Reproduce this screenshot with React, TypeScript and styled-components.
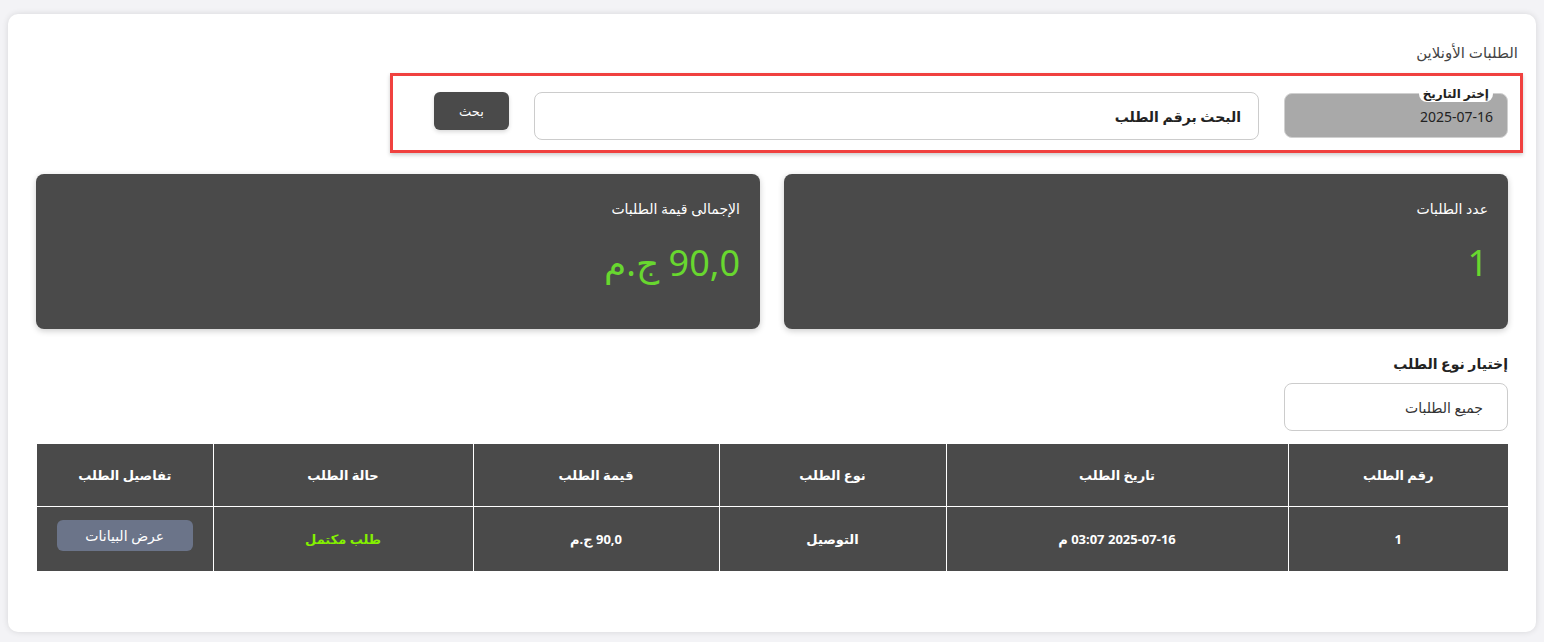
import React from "react";
import styled, { createGlobalStyle } from "styled-components";

const Global = createGlobalStyle`
  html, body { margin: 0; padding: 0; background: #f3f3f6; }
  body { font-family: "Noto Sans", "DejaVu Sans", sans-serif; }
  * { box-sizing: border-box; }
`;

const Page = styled.div`
  padding: 14px 8px 10px 8px;
`;

const Card = styled.div`
  direction: rtl;
  background: #fff;
  border-radius: 10px;
  box-shadow: 0 0 6px rgba(0, 0, 0, 0.12);
  height: 618px;
  padding: 26px 28px 0 28px;
  display: flex;
  flex-direction: column;
`;

const Title = styled.div`
  margin-right: -10px;
  font-size: 15px;
  color: #444;
  line-height: 24px;
  height: 24px;
`;

const FilterBox = styled.div`
  margin-top: 9px;
  margin-right: -15px;
  width: 1133px;
  height: 80px;
  border: 3px solid #f0413f;
  box-shadow: 0 2px 4px rgba(0, 0, 0, 0.2);
  display: flex;
  align-items: flex-start;
  padding: 16px 12px 0 0;
  gap: 25px;
`;

const DateField = styled.div`
  position: relative;
  width: 224px;
  height: 45px;
  background: #a9a9a9;
  border: 1px solid #d0d0d0;
  border-radius: 8px;
  margin-top: 1px;
  display: flex;
  align-items: center;
  padding: 2px 14px 0 14px;
  font-size: 14px;
  color: #222;
`;

const FloatLabel = styled.span`
  position: absolute;
  top: -8px;
  right: 14px;
  background: #fff;
  border-radius: 8px;
  padding: 0 4px;
  font-size: 12px;
  line-height: 16px;
  color: #222;
  font-weight: 600;
`;

const SearchInput = styled.div`
  width: 725px;
  height: 48px;
  border: 1px solid #ccc;
  border-radius: 8px;
  display: flex;
  align-items: center;
  padding: 0 17px;
  font-size: 14px;
  font-weight: 600;
  color: #222;
`;

const SearchButton = styled.button`
  width: 75px;
  height: 38px;
  border: none;
  border-radius: 6px;
  background: #4a4a4a;
  color: #fff;
  font-family: inherit;
  font-size: 13px;
  box-shadow: 0 2px 4px rgba(0, 0, 0, 0.15);
`;

const Stats = styled.div`
  margin-top: 21px;
  display: flex;
  gap: 24px;
`;

const StatCard = styled.div`
  flex: 1;
  height: 155px;
  background: #4a4a4a;
  border-radius: 8px;
  box-shadow: 0 2px 6px rgba(0, 0, 0, 0.2);
  padding: 24px 20px 0 20px;
  color: #fff;
`;

const StatLabel = styled.div`
  font-size: 14px;
  line-height: 22px;
`;

const StatValue = styled.div`
  margin-top: 18px;
  font-size: 36px;
  line-height: 50px;
  color: #68d72f;
`;

const TypeLabel = styled.div`
  margin-top: 24px;
  font-size: 14px;
  font-weight: 700;
  color: #222;
  line-height: 22px;
`;

const Select = styled.div`
  margin-top: 8px;
  width: 224px;
  height: 48px;
  border: 1px solid #ccc;
  border-radius: 8px;
  display: flex;
  align-items: center;
  padding: 0 24px;
  font-size: 14px;
  color: #333;
`;

const Table = styled.table`
  margin-top: 13px;
  margin-left: 1px;
  width: 1471px;
  border-collapse: collapse;
  background: #4a4a4a;
  color: #fff;
  font-size: 13px;
  font-weight: 700;
  text-align: center;
`;

const Th = styled.th<{ $w: number }>`
  width: ${(p) => p.$w}px;
  height: 62px;
  border: 1px solid #fff;
  border-top: none;
  font-weight: 700;
  &:first-child { border-right: none; }
  &:last-child { border-left: none; }
`;

const Td = styled.td<{ $green?: boolean }>`
  height: 65px;
  border: 1px solid #fff;
  border-bottom: none;
  color: ${(p) => (p.$green ? "#84f000" : "#fff")};
  &:first-child { border-right: none; }
  &:last-child { border-left: none; }
`;

const DetailsButton = styled.button`
  width: 136px;
  height: 31px;
  margin-bottom: 6px;
  border: none;
  border-radius: 6px;
  background: #6b7489;
  color: #fff;
  font-family: inherit;
  font-size: 14px;
`;

const columns = [
  { label: "رقم الطلب", w: 220 },
  { label: "تاريخ الطلب", w: 342 },
  { label: "نوع الطلب", w: 227 },
  { label: "قيمة الطلب", w: 246 },
  { label: "حالة الطلب", w: 260 },
  { label: "تفاصيل الطلب", w: 176 },
];

export default function App() {
  return (
    <Page>
      <Global />
      <Card>
        <Title>الطلبات الأونلاين</Title>
        <FilterBox>
          <DateField>
            <FloatLabel>إختر التاريخ</FloatLabel>
            2025-07-16
          </DateField>
          <SearchInput>البحث برقم الطلب</SearchInput>
          <SearchButton>بحث</SearchButton>
        </FilterBox>
        <Stats>
          <StatCard>
            <StatLabel>عدد الطلبات</StatLabel>
            <StatValue>1</StatValue>
          </StatCard>
          <StatCard>
            <StatLabel>الإجمالى قيمة الطلبات</StatLabel>
            <StatValue>90,0 ج.م</StatValue>
          </StatCard>
        </Stats>
        <TypeLabel>إختيار نوع الطلب</TypeLabel>
        <Select>جميع الطلبات</Select>
        <Table>
          <thead>
            <tr>
              {columns.map((c) => (
                <Th key={c.label} $w={c.w}>
                  {c.label}
                </Th>
              ))}
            </tr>
          </thead>
          <tbody>
            <tr>
              <Td>1</Td>
              <Td>2025-07-16 03:07 م</Td>
              <Td>التوصيل</Td>
              <Td>90,0 ج.م</Td>
              <Td $green>طلب مكتمل</Td>
              <Td>
                <DetailsButton>عرض البيانات</DetailsButton>
              </Td>
            </tr>
          </tbody>
        </Table>
      </Card>
    </Page>
  );
}
